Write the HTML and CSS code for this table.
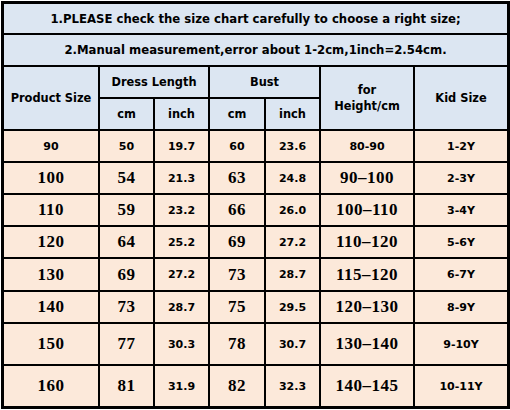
FILE: index.html
```html
<!DOCTYPE html>
<html>
<head>
<link rel="stylesheet" href="styles.css">
</head>
<body>

<div class="chart">
  <div class="cell head note">1.PLEASE check the size chart carefully to choose a right size;</div>
  <div class="cell head note">2.Manual measurement,error about 1-2cm,1inch=2.54cm.</div>

  <div class="cell head tall">Product Size</div>
  <div class="cell head span2">Dress Length</div>
  <div class="cell head span2">Bust</div>
  <div class="cell head tall">for<br>Height/cm</div>
  <div class="cell head tall">Kid Size</div>
  <div class="cell head">cm</div>
  <div class="cell head">inch</div>
  <div class="cell head">cm</div>
  <div class="cell head">inch</div>

  <div class="cell num">90</div>
  <div class="cell num">50</div>
  <div class="cell num">19.7</div>
  <div class="cell num">60</div>
  <div class="cell num">23.6</div>
  <div class="cell num">80-90</div>
  <div class="cell num">1-2Y</div>

  <div class="cell big">100</div>
  <div class="cell big">54</div>
  <div class="cell num">21.3</div>
  <div class="cell big">63</div>
  <div class="cell num">24.8</div>
  <div class="cell big">90–100</div>
  <div class="cell num">2-3Y</div>

  <div class="cell big">110</div>
  <div class="cell big">59</div>
  <div class="cell num">23.2</div>
  <div class="cell big">66</div>
  <div class="cell num">26.0</div>
  <div class="cell big">100–110</div>
  <div class="cell num">3-4Y</div>

  <div class="cell big">120</div>
  <div class="cell big">64</div>
  <div class="cell num">25.2</div>
  <div class="cell big">69</div>
  <div class="cell num">27.2</div>
  <div class="cell big">110–120</div>
  <div class="cell num">5-6Y</div>

  <div class="cell big">130</div>
  <div class="cell big">69</div>
  <div class="cell num">27.2</div>
  <div class="cell big">73</div>
  <div class="cell num">28.7</div>
  <div class="cell big">115–120</div>
  <div class="cell num">6-7Y</div>

  <div class="cell big">140</div>
  <div class="cell big">73</div>
  <div class="cell num">28.7</div>
  <div class="cell big">75</div>
  <div class="cell num">29.5</div>
  <div class="cell big">120–130</div>
  <div class="cell num">8-9Y</div>

  <div class="cell big">150</div>
  <div class="cell big">77</div>
  <div class="cell num">30.3</div>
  <div class="cell big">78</div>
  <div class="cell num">30.7</div>
  <div class="cell big">130–140</div>
  <div class="cell num">9-10Y</div>

  <div class="cell big">160</div>
  <div class="cell big">81</div>
  <div class="cell num">31.9</div>
  <div class="cell big">82</div>
  <div class="cell num">32.3</div>
  <div class="cell big">140–145</div>
  <div class="cell num">10-11Y</div>
</div>

</body>
</html>
```

FILE: styles.css
```css
body {
  margin: 0;
  background-color: #fff;
  font-family: "DejaVu Sans", Verdana, sans-serif;
}

.chart {
  display: grid;
  grid-template-columns: 94px 53px 53px 54px 53px 92px 92px;
  grid-template-rows: 29px 30px 30px 30px 30px 30px 30px 30px 31px 30px 40px 40px;
  gap: 2px;
  width: 509px;
  margin: 1px 0 0 1px;
  padding: 3px;
  box-sizing: border-box;
  background-color: #000;
}

.cell {
  display: flex;
  align-items: center;
  justify-content: center;
  text-align: center;
  background-color: #fce9da;
  color: #000;
}

.head {
  background-color: #dce6f2;
  font-size: 11.4px;
  font-weight: bold;
  line-height: 16px;
}

.note {
  grid-column: 1 / -1;
  font-size: 11.7px;
}

.span2 {
  grid-column: span 2;
}

.tall {
  grid-row: span 2;
}

.num {
  font-size: 11px;
  font-weight: bold;
}

.big {
  font-family: "Liberation Serif", "Times New Roman", serif;
  font-size: 17px;
  font-weight: bold;
  letter-spacing: 0.5px;
}
```
